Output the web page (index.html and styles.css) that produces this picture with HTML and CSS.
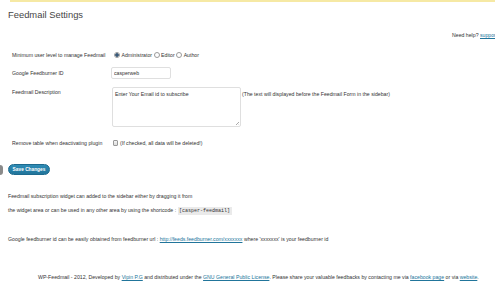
FILE: index.html
```html
<!DOCTYPE html>
<html>
<head>
<meta charset="utf-8">
<link rel="stylesheet" href="styles.css">
</head>
<body>
<div class="notice-line"></div>
<div class="wrap">
  <h2 class="title">Feedmail Settings</h2>
  <div class="help">Need help? <a href="#">support</a></div>
  <div class="form">
    <div class="row row-level">
      <div class="label">Minimum user level to manage Feedmail</div>
      <div class="field radios">
        <span class="radio checked"></span><span class="opt">Administrator</span>
        <span class="radio"></span><span class="opt">Editor</span>
        <span class="radio"></span><span class="opt">Author</span>
      </div>
    </div>
    <div class="row row-id">
      <div class="label">Google Feedburner ID</div>
      <div class="field"><input class="text-input" type="text" value="casperweb"></div>
    </div>
    <div class="row row-desc">
      <div class="label">Feedmail Description</div>
      <div class="field desc-field">
        <div class="textarea">Enter Your Email id to subscribe<span class="grip"></span></div>
        <span class="hint">(The text will displayed before the Feedmail Form in the sidebar)</span>
      </div>
    </div>
    <div class="row row-remove">
      <div class="label">Remove table when deactivating plugin</div>
      <div class="field check-field"><span class="checkbox"></span><span class="hint">(If checked, all data will be deleted!)</span></div>
    </div>
  </div>
  <div class="submit-row"><span class="menu-tip"></span><button class="button-primary">Save Changes</button></div>
  <p class="para p1">Feedmail subscription widget can added to the sidebar either by dragging it from</p>
  <p class="para p2">the widget area or can be used in any other area by using the shortcode : <code class="shortcode">[casper-feedmail]</code></p>
  <p class="para p3">Google feedburner id can be easily obtained from feedburner url : <a href="#">http://feeds.feedburner.com/xxxxxxx</a> where 'xxxxxxx' is your feedburner id</p>
  <p class="footer">WP-Feedmail - 2012, Developed by <a href="#">Vipin P.G</a> and distributed under the <a href="#">GNU General Public License</a>. Please share your valuable feedbacks by contacting me via <a href="#">facebook page</a> or via <a href="#">website</a>.</p>
</div>
</body>
</html>
```
FILE: styles.css
```css
html, body {
  margin: 0;
  padding: 0;
  background: #fff;
  overflow: hidden;
  font-family: "Liberation Sans", Arial, sans-serif;
  color: #333;
}

.notice-line {
  margin-left: 10px;
  height: 2px;
  background: #f6e9a4;
}

.wrap {
  padding-left: 8px;
}

.title {
  margin: 7px 0 0;
  font-size: 9.4px;
  line-height: 12px;
  font-weight: normal;
  color: #464646;
}

.help {
  margin-top: 10px;
  padding-left: 444px;
  font-size: 5.2px;
  line-height: 8px;
  white-space: nowrap;
}

a {
  color: #21759b;
  text-decoration: underline;
}

.form {
  margin-top: 10px;
  display: flex;
  flex-direction: column;
  font-size: 5.2px;
}

.row {
  display: flex;
  padding-left: 4px;
}

.label {
  width: 100px;
  flex: none;
}

.row-level { height: 12px; line-height: 12px; }
.row-id { margin-top: 6px; height: 12px; line-height: 12px; }
.row-desc { margin-top: 8px; height: 40px; line-height: 10px; }
.row-remove { margin-top: 9px; height: 14px; line-height: 14px; }

.radios {
  display: flex;
  align-items: center;
  padding-left: 2px;
}

.radio {
  width: 4px;
  height: 4px;
  border: 0.5px solid #9a9a9a;
  border-radius: 50%;
  background: #fff;
  margin-right: 1.5px;
}
.radio.checked {
  background: radial-gradient(circle, #3a5a7a 0 55%, #fff 65%);
}
.opt { margin-right: 1.5px; }

.text-input {
  box-sizing: border-box;
  width: 60px;
  height: 12px;
  margin: 0 0 0 -1px;
  padding: 0 2px;
  border: 1px solid #dfdfdf;
  border-radius: 2px;
  font-family: "Liberation Sans", Arial, sans-serif;
  font-size: 5.2px;
  color: #333;
  background: #fff;
  outline: none;
}

.desc-field {
  display: flex;
  align-items: flex-start;
}

.textarea {
  position: relative;
  box-sizing: border-box;
  width: 129px;
  height: 40px;
  border: 1px solid #dfdfdf;
  border-radius: 2px;
  padding: 3px 2px;
  line-height: 6px;
}

.grip {
  position: absolute;
  right: 1px;
  bottom: 1px;
  width: 3px;
  height: 3px;
  background: linear-gradient(135deg, transparent 45%, #aaa 50%, transparent 55%, transparent 75%, #aaa 80%, transparent 85%);
}

.desc-field .hint {
  margin-left: 1px;
  line-height: 14px;
}

.check-field {
  display: flex;
  align-items: center;
  padding-left: 1px;
}

.checkbox {
  box-sizing: border-box;
  width: 5px;
  height: 6px;
  border: 0.5px solid #999;
  border-radius: 1px;
  background: linear-gradient(#f4f4f4, #dcdcdc);
  margin-right: 2px;
}

.submit-row {
  margin: 14px 0 0 -8px;
  display: flex;
  align-items: center;
}

.menu-tip {
  width: 3px;
  height: 10px;
  background: #8a8a8a;
  border-radius: 0 5px 5px 0;
  margin-right: 5px;
}

.button-primary {
  height: 11px;
  width: 42px;
  padding: 0;
  border: 0.5px solid #1d6a8e;
  border-radius: 6px;
  background: linear-gradient(#2e8bb5, #21759b);
  color: #fff;
  font-family: "Liberation Sans", Arial, sans-serif;
  font-weight: bold;
  font-size: 4.8px;
  line-height: 10px;
}

.para {
  margin: 0;
  font-size: 5.2px;
  line-height: 8px;
}
.p1 { margin-top: 17px; }
.p2 { margin-top: 5.5px; }
.p3 { margin-top: 20.5px; }

.shortcode {
  font-family: "Liberation Mono", "Courier New", monospace;
  font-size: 5px;
  background: #eaeaea;
  padding: 1px 1.5px;
}

.footer {
  margin: 30px 0 0 30px;
  font-size: 5.2px;
  line-height: 8px;
  white-space: nowrap;
}
```
